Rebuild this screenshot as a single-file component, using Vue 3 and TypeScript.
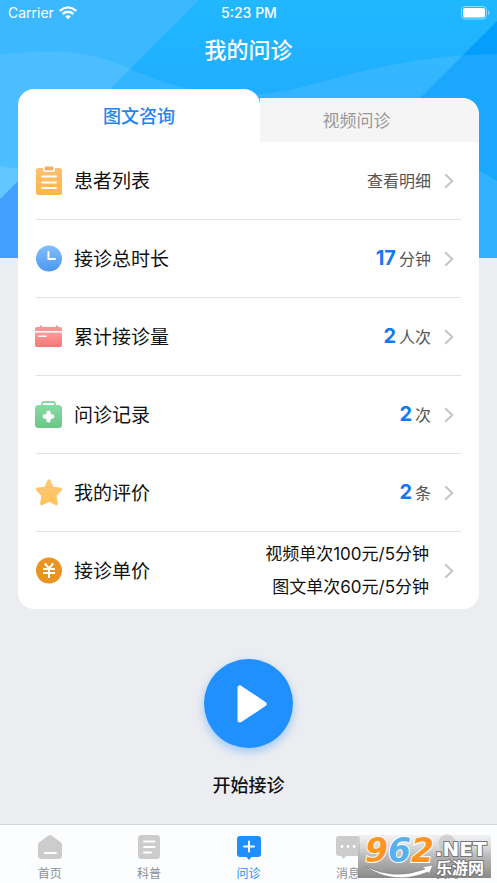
<script setup lang="ts">
import { ref } from 'vue'

type IconName = 'list' | 'clock' | 'calendar' | 'kit' | 'star' | 'price'
interface Row {
  icon: IconName
  label: string
  value?: string
  unit?: string
  prices?: string[]
}
type NavIcon = 'home' | 'article' | 'consult' | 'message' | 'me'

const rows: Row[] = [
  { icon: 'list', label: '患者列表', unit: '查看明细' },
  { icon: 'clock', label: '接诊总时长', value: '17', unit: '分钟' },
  { icon: 'calendar', label: '累计接诊量', value: '2', unit: '人次' },
  { icon: 'kit', label: '问诊记录', value: '2', unit: '次' },
  { icon: 'star', label: '我的评价', value: '2', unit: '条' },
  { icon: 'price', label: '接诊单价', prices: ['视频单次100元/5分钟', '图文单次60元/5分钟'] },
]

const nav: { icon: NavIcon; label: string }[] = [
  { icon: 'home', label: '首页' },
  { icon: 'article', label: '科普' },
  { icon: 'consult', label: '问诊' },
  { icon: 'message', label: '消息' },
  { icon: 'me', label: '我的' },
]

const activeTab = ref(0)
const activeNav = ref<NavIcon>('consult')
</script>

<template>
  <div class="page">
    <svg class="backdrop" viewBox="0 0 497 258" preserveAspectRatio="none" aria-hidden="true">
      <defs>
        <linearGradient id="sky" x1="0" y1="0" x2="0" y2="1">
          <stop offset="0" stop-color="#20b8ff" />
          <stop offset="0.4" stop-color="#20acff" />
          <stop offset="1" stop-color="#2b97ff" />
        </linearGradient>
      </defs>
      <rect width="497" height="258" fill="url(#sky)" />
      <path d="M0 0H199L0 199Z" fill="#3bb8ff" />
      <path d="M497 21L260 258H497Z" fill="#049ffc" />
      <path d="M0 55C50 48 90 50 130 69C180 92 235 101 290 90C350 75 410 55 497 54V258H0Z" fill="#fff" fill-opacity="0.09" />
      <path d="M0 199L28 171V258H0Z" fill="#459fff" />
      <path d="M0 166Q15 168 28 171L0 199Z" fill="#61c6ff" />
      <path d="M470 165L497 181V258H470Z" fill="#30b0ff" />
    </svg>

    <div class="content">
      <div class="status">
        <span class="carrier">
          Carrier
          <svg width="18" height="14" viewBox="0 0 18 14" aria-hidden="true">
            <path d="M0.8 4.8Q9-2 17.2 4.8M3.6 8Q9 3.6 14.4 8" fill="none" stroke="#fff" stroke-width="2.3" />
            <path d="M6.2 10.3Q9 8.2 11.8 10.3L9 13.3Z" fill="#fff" />
          </svg>
        </span>
        <span class="time">5:23 PM</span>
        <svg class="battery" width="29" height="14" viewBox="0 0 29 14" aria-hidden="true">
          <rect x="0.5" y="0.5" width="25" height="12.5" rx="3.5" fill="none" stroke="#8bdbff" />
          <rect x="2" y="2" width="22" height="9.5" rx="2" fill="#fff" />
          <path d="M27 4.5Q28.5 5 28.5 6.8Q28.5 8.5 27 9Z" fill="#8bdbff" />
        </svg>
      </div>
      <h1>我的问诊</h1>

      <main>
        <div class="tabs" :class="{ 'second-open': activeTab === 1 }" role="tablist">
          <button class="tab" role="tab" :class="{ active: activeTab === 0 }" :aria-selected="activeTab === 0" @click="activeTab = 0">图文咨询</button>
          <button class="tab" role="tab" :class="{ active: activeTab === 1 }" :aria-selected="activeTab === 1" @click="activeTab = 1">视频问诊</button>
        </div>
        <ul class="rows">
          <li v-for="row in rows" :key="row.icon">
            <a class="row" href="#">
              <svg class="icon" viewBox="0 0 28 30" aria-hidden="true">
                <template v-if="row.icon === 'list'">
                  <defs><linearGradient id="g-list" x2="0" y2="1"><stop stop-color="#ffc073" /><stop offset="1" stop-color="#ffb548" /></linearGradient></defs>
                  <rect x="1" y="2" width="26" height="27" rx="2.5" fill="url(#g-list)" />
                  <path d="M8 1V3Q8 6 11 6H17Q20 6 20 3V1Z" fill="#fff" />
                  <rect x="9.5" y="0.5" width="9" height="4" rx="1.5" fill="#e9b070" />
                  <path d="M7 10.5H21M7 16.5H21M7 22H21" stroke="#fff" stroke-width="1.8" stroke-linecap="round" />
                </template>
                <template v-else-if="row.icon === 'clock'">
                  <defs><linearGradient id="g-clock" x2="0" y2="1"><stop stop-color="#84bdff" /><stop offset="1" stop-color="#4a98ee" /></linearGradient></defs>
                  <circle cx="14" cy="14.5" r="13" fill="url(#g-clock)" />
                  <path d="M13.5 8V15H20" fill="none" stroke="#fff" stroke-width="2" stroke-linecap="round" />
                </template>
                <template v-else-if="row.icon === 'calendar'">
                  <defs><linearGradient id="g-cal" x2="0" y2="1"><stop stop-color="#ff9b9b" /><stop offset="1" stop-color="#f57575" /></linearGradient></defs>
                  <path d="M0 9V7Q0 5 2 5H5V3.5H7V5H21V3.5H23V5H25Q27 5 27 7V9Z" fill="#fa9494" />
                  <path d="M0 10.5H27V23Q27 25 25 25H2Q0 25 0 23Z" fill="url(#g-cal)" />
                  <path d="M4 14.2H11" stroke="#fff" stroke-width="1.6" stroke-linecap="round" />
                </template>
                <template v-else-if="row.icon === 'kit'">
                  <defs><linearGradient id="g-kit" x2="0" y2="1"><stop stop-color="#8bd8a4" /><stop offset="1" stop-color="#68c887" /></linearGradient></defs>
                  <path d="M7 6V4Q7 2 9 2H18Q20 2 20 4V6" fill="none" stroke="#8bd8a4" stroke-width="1.8" />
                  <rect x="0" y="5" width="27" height="23" rx="3.5" fill="url(#g-kit)" />
                  <path d="M13.5 12.8V20.2M9.8 16.5H17.2" stroke="#fff" stroke-width="4.4" stroke-linecap="round" />
                </template>
                <template v-else-if="row.icon === 'star'">
                  <defs><linearGradient id="g-star" x2="0" y2="1"><stop stop-color="#ffc77a" /><stop offset="1" stop-color="#ffc259" /></linearGradient></defs>
                  <path d="M14 3L17.4 10.4L25.5 11.3L19.7 17.2L21.2 25.5L14 21.7L6.8 25.5L8.3 17.2L2.5 11.3L10.6 10.4Z" fill="url(#g-star)" stroke="url(#g-star)" stroke-width="3.4" stroke-linejoin="round" />
                </template>
                <template v-else>
                  <circle cx="14" cy="14.5" r="13" fill="#e99421" />
                  <path d="M9.8 7.5L14 12.5L18.2 7.5M8 13H20M8 17H20M14 12.5V22" fill="none" stroke="#fff" stroke-width="2" />
                </template>
              </svg>
              <span class="label">{{ row.label }}</span>
              <span v-if="row.prices" class="prices">
                <span v-for="price in row.prices" :key="price">{{ price }}</span>
              </span>
              <span v-else class="detail"><b v-if="row.value">{{ row.value }}</b>{{ row.unit }}</span>
              <svg class="chevron" width="10" height="16" viewBox="0 0 10 16" aria-hidden="true">
                <path d="M1.2 1.2L8.2 8L1.2 14.8" fill="none" stroke="#c4c4c6" stroke-width="2" />
              </svg>
            </a>
          </li>
        </ul>
      </main>

      <div class="start">
        <button class="play" aria-labelledby="start-label">
          <svg width="30" height="38" viewBox="0 0 30 38" aria-hidden="true">
            <path d="M3 3V35L27 19Z" fill="#fff" stroke="#fff" stroke-width="5" stroke-linejoin="round" />
          </svg>
        </button>
        <span id="start-label">开始接诊</span>
      </div>
    </div>

    <nav class="nav">
      <a v-for="item in nav" :key="item.icon" href="#" :class="{ current: activeNav === item.icon }" @click.prevent="activeNav = item.icon">
        <svg width="26" height="26" viewBox="0 0 26 26" aria-hidden="true">
          <template v-if="item.icon === 'home'">
            <path d="M11.4 1.5Q13 0.4 14.6 1.5L23.5 8Q25 9.2 25 11V21.5Q25 25 21.5 25H4.5Q1 25 1 21.5V11Q1 9.2 2.5 8Z" fill="currentColor" />
            <path d="M7.5 19H19" stroke="#fff" stroke-width="1.8" stroke-linecap="round" />
          </template>
          <template v-else-if="item.icon === 'article'">
            <rect x="2" y="1" width="22" height="24" rx="3.5" fill="currentColor" />
            <path d="M8 7.5H18.5M8 13H18.5M8 18.5H15" stroke="#fff" stroke-width="2" stroke-linecap="round" />
          </template>
          <template v-else-if="item.icon === 'consult'">
            <path d="M4 2H22Q25 2 25 5V20Q25 23 22 23H15.5L13 26L10.5 23H4Q1 23 1 20V5Q1 2 4 2Z" fill="currentColor" />
            <path d="M13 7.5V17.5M8 12.5H18" stroke="#fff" stroke-width="2" stroke-linecap="round" />
          </template>
          <template v-else-if="item.icon === 'message'">
            <path d="M4 2H22Q25 2 25 5V19Q25 22 22 22H11L8.5 25L6 22H4Q1 22 1 19V5Q1 2 4 2Z" fill="currentColor" />
            <path d="M7 12.5H7.1M13 12.5H13.1M19 12.5H19.1" stroke="#fff" stroke-width="2.8" stroke-linecap="round" />
          </template>
          <template v-else>
            <circle cx="13" cy="9" r="8.5" fill="currentColor" />
            <path d="M1 25Q2 17 13 17Q24 17 25 25Z" fill="currentColor" />
          </template>
        </svg>
        <span>{{ item.label }}</span>
      </a>
      <svg class="watermark" width="133" height="43" viewBox="0 0 133 43" role="img" aria-label="962.NET 乐游网">
        <defs>
          <linearGradient id="mark" x2="0" y2="1"><stop stop-color="#e0e0e0" stop-opacity="0.4" /><stop offset="0.5" stop-color="#acacac" stop-opacity="0.85" /><stop offset="1" stop-color="#7c7c7c" stop-opacity="0.9" /></linearGradient>
        </defs>
        <rect width="133" height="43" fill="url(#mark)" />
        <path d="M7 31Q36 46 67 34L64 32L75 30L71 39L70 37Q35 51 7 31Z" fill="#fff" stroke="#777" stroke-width="0.5" />
        <g class="digits">
          <text x="7" y="27" fill="#ff951f">9</text>
          <text x="30" y="27" fill="#58b1ec">6</text>
          <text x="53" y="27" fill="#ff951f">2</text>
        </g>
        <text class="net" x="77" y="21">.NET</text>
        <text class="site" x="78" y="39">乐游网</text>
      </svg>
    </nav>
  </div>
</template>

<style>
body {
  margin: 0;
  background: #ecedf1;
}
</style>

<style scoped>
.page {
  display: grid;
  grid-template-columns: minmax(0, 1fr);
  grid-template-rows: 1fr auto;
  min-height: 100vh;
  font-family: Inter, "Noto Sans CJK SC", sans-serif;
  color: #111;
}
.backdrop {
  grid-area: 1 / 1;
  width: 100%;
  height: 258px;
}
.content {
  grid-area: 1 / 1;
  z-index: 1;
  display: flex;
  flex-direction: column;
}
.status {
  display: grid;
  grid-template-columns: 1fr auto 1fr;
  align-items: center;
  height: 25px;
  padding: 0 7px 0 8px;
  color: #fff;
  font-size: 14px;
}
.carrier {
  display: flex;
  align-items: center;
  gap: 5px;
}
.time {
  font-weight: 500;
}
.battery {
  justify-self: end;
}
h1 {
  margin: 9px 0 23px;
  color: #fff;
  font-size: 22px;
  font-weight: 500;
  line-height: 32px;
  text-align: center;
}
main {
  margin: 0 18px;
}
.tabs {
  display: grid;
  grid-template-columns: 21fr 19fr;
  align-items: end;
}
.tabs.second-open {
  grid-template-columns: 19fr 21fr;
}
.tab {
  height: 44px;
  padding: 0 26px 2px 0;
  border: 0;
  border-radius: 0 16px 0 0;
  background: #f5f5f5;
  color: #999;
  font-family: inherit;
  font-size: 17px;
}
.tab:first-child {
  border-radius: 16px 0 0 0;
}
.tab.active {
  height: 53px;
  padding: 0 0 2px;
  border-radius: 16px 16px 0 0;
  background: #fff;
  color: #2385f5;
  font-size: 18px;
  font-weight: 500;
}
.rows {
  margin: 0;
  padding: 0 18px;
  border-radius: 0 0 16px 16px;
  background: #fff;
  list-style: none;
}
.rows li + li {
  border-top: 1px solid #e3e3e5;
}
.row {
  display: flex;
  align-items: center;
  height: 77px;
  padding-right: 7px;
  color: inherit;
  text-decoration: none;
}
.icon {
  width: 28px;
  height: 30px;
  margin: 0 11px 0 -1px;
}
.label {
  flex: 1;
  padding-bottom: 2px;
  font-size: 19px;
}
.detail {
  display: flex;
  align-items: center;
  gap: 3px;
  padding-bottom: 2px;
  color: #555;
  font-size: 16px;
}
.detail b {
  color: #1378f5;
  font-size: 20px;
}
.prices {
  display: flex;
  flex-direction: column;
  margin-right: 2px;
  font-size: 17px;
  line-height: 33px;
  text-align: right;
}
.chevron {
  margin-left: 13px;
}
.start {
  display: flex;
  flex-direction: column;
  align-items: center;
  gap: 24px;
  padding: 50px 0 23px;
  font-size: 18px;
  font-weight: 500;
  line-height: 28px;
}
.play {
  display: flex;
  align-items: center;
  justify-content: center;
  width: 89px;
  height: 89px;
  padding: 0 0 0 6px;
  border: 0;
  border-radius: 50%;
  background: #2090ff;
  box-shadow: 0 4px 10px #2090ff66;
}
.nav {
  position: relative;
  display: flex;
  height: 58px;
  border-top: 1px solid #d2d3d8;
  background: #fcfdff;
}
.nav a {
  flex: 1;
  display: flex;
  flex-direction: column;
  align-items: center;
  gap: 6px;
  padding-top: 9px;
  color: #ccc;
  font-size: 12px;
  line-height: 16px;
  text-decoration: none;
}
.nav a span {
  color: #8e8e92;
}
.nav .current,
.nav .current span {
  color: #1f8fff;
}
.watermark {
  position: absolute;
  right: 6px;
  bottom: 5px;
  overflow: visible;
}
.digits {
  font: italic 700 33px "DejaVu Sans", sans-serif;
  stroke: #fff;
  stroke-width: 2px;
  paint-order: stroke;
}
.net,
.site {
  fill: #fff;
  stroke: #777;
  stroke-width: 2px;
  paint-order: stroke;
}
.net {
  font: 700 20px "DejaVu Sans", sans-serif;
}
.site {
  font: 700 16px "Noto Sans CJK SC", sans-serif;
}
</style>
